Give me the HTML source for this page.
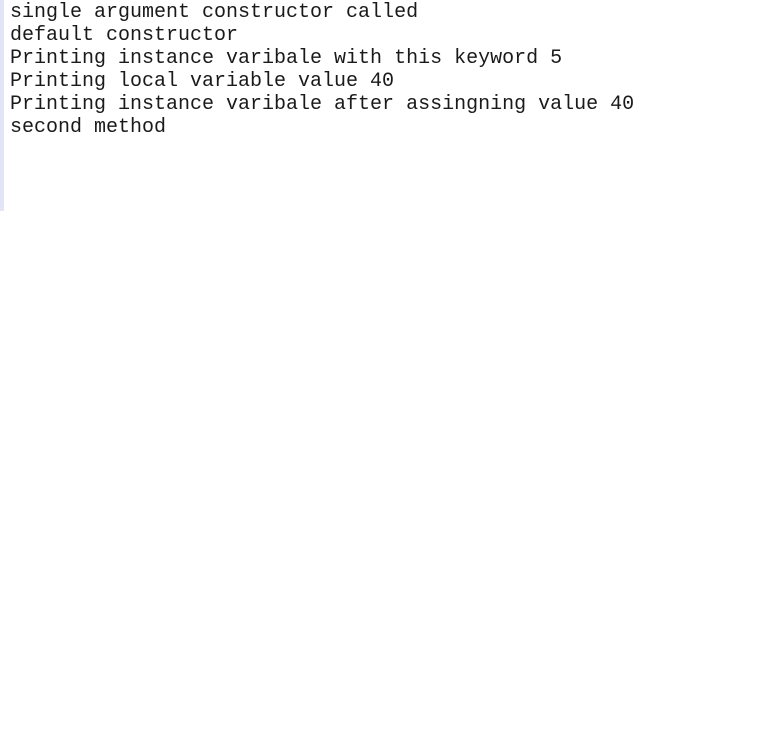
<!DOCTYPE html>
<html><head><style>
html,body{margin:0;padding:0;background:#fff;width:760px;height:748px;overflow:hidden}
.bar{position:absolute;left:0;top:0;width:4px;height:211px;background:#e1e5f5}
pre{position:absolute;left:10px;top:1px;margin:0;font-family:"Liberation Mono",monospace;font-size:20px;line-height:23px;color:#1a1a1a}
</style></head><body>
<div class="bar"></div>
<pre>single argument constructor called
default constructor
Printing instance varibale with this keyword 5
Printing local variable value 40
Printing instance varibale after assingning value 40
second method</pre>
</body></html>
